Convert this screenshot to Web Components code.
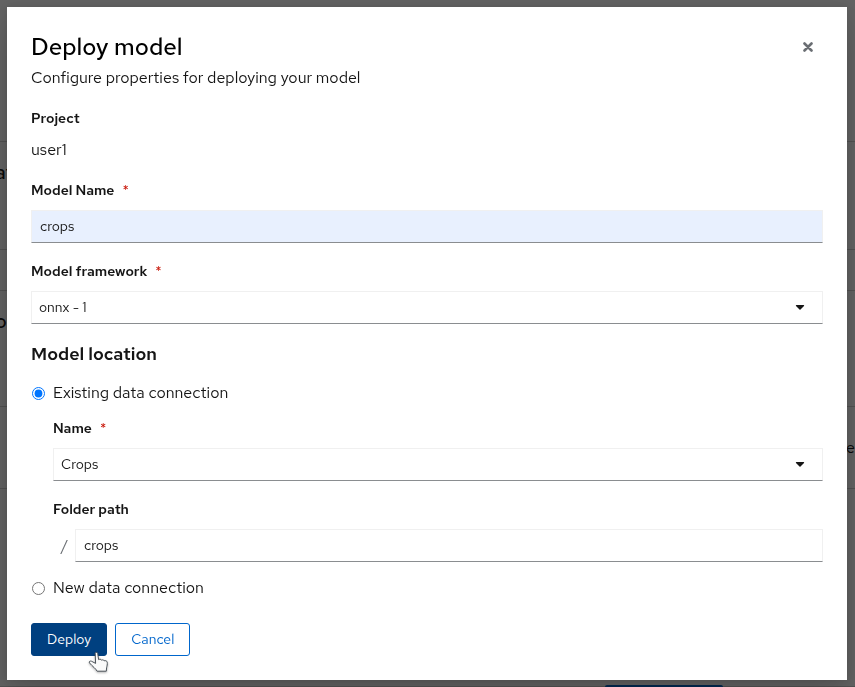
<!DOCTYPE html>
<html lang="en">
<head>
<meta charset="utf-8">
<title>Deploy model</title>
<style>
  html, body { margin: 0; height: 100%; overflow: hidden; }
  body { font-family: "Red Hat Text", Lato, "Open Sans", sans-serif; font-size: 16px; line-height: 24px; color: #151515; background: #fff; }
</style>
</head>
<body>
<project-page></project-page>
<modal-overlay>
  <deploy-dialog></deploy-dialog>
</modal-overlay>
<script>
const define = (name, html, setup) => {
  const template = document.createElement('template');
  template.innerHTML = html;
  customElements.define(name, class extends HTMLElement {
    constructor() {
      super();
      this.attachShadow({ mode: 'open' }).append(template.content.cloneNode(true));
    }
    connectedCallback() { if (setup) setup(this, this.shadowRoot); }
  });
};

define('project-page', `
  <style>
    :host { display: grid; height: 100vh; overflow: hidden; background: #fff; font-size: 20px; font-weight: 500;
      grid-template-rows: 142px 108px 41px 116px 82px 1fr; }
    section { display: flex; align-items: center; justify-content: space-between; border-bottom: 1px solid #d2d2d2; overflow: hidden; }
    .top { align-items: flex-start; padding-top: 18px; }
    .light { justify-content: flex-end; font-size: 16px; font-weight: 400; }
    .end { align-items: flex-end; justify-content: flex-end; border-bottom: 0; box-shadow: inset 0 -1px #d2d2d2; }
    .strip { width: 118px; height: 2px; margin-right: 132px; background: #06c; border-radius: 2px 2px 0 0; }
    .cut { margin-left: -5px; }
  </style>
  <section></section>
  <section class="top"><span class="cut">at</span></section>
  <section></section>
  <section class="top"><span class="cut">o</span></section>
  <section class="light"><span>e</span></section>
  <section class="end"><div class="strip"></div></section>
`);

define('modal-overlay', `
  <style>
    :host { position: fixed; inset: 0; box-sizing: border-box; padding: 7px 8px 7px 7px; background: rgba(3,3,3,.62); }
  </style>
  <slot></slot>
`);

define('form-field', `
  <style>
    :host { display: flex; flex-direction: column; gap: 10px; min-width: 0; }
    .label { display: flex; gap: 8px; font-size: 14px; line-height: 20px; font-weight: 600; }
    .star { color: #c9190b; font-weight: 400; }
    .row { display: flex; align-items: center; }
    .prefix { width: 22px; box-sizing: border-box; padding-left: 8px; color: #6a6e73; }
    .control { position: relative; flex: 1; display: flex; min-width: 0; }
    input, select { flex: 1; min-width: 0; width: 100%; height: 33px; box-sizing: border-box; margin: 0; border: 1px solid #f0f0f0;
      border-bottom-color: #8a8d90; border-radius: 0; background: #fff; font: inherit; font-size: 14px;
      line-height: 21px; color: #151515; padding: 0 8px 2px; outline: 0; appearance: none; }
    select { padding: 0 7px; }
    .filled { background: #e8f0fe; }
    svg { position: absolute; right: 18px; top: 14px; pointer-events: none; }
  </style>
  <label class="label" for="control"><span class="text"></span></label>
  <div class="row"></div>
`, (host, root) => {
  root.querySelector('.text').textContent = host.getAttribute('label');
  if (host.hasAttribute('required')) {
    const star = document.createElement('span');
    star.className = 'star';
    star.textContent = '*';
    root.querySelector('.label').append(star);
  }
  const row = root.querySelector('.row');
  const value = host.getAttribute('value');
  const prefix = host.getAttribute('prefix');
  row.innerHTML = (prefix ? `<span class="prefix">${prefix}</span>` : '') + '<div class="control">' +
    (host.getAttribute('type') === 'select'
      ? `<select id="control"><option>${value}</option></select><svg width="10" height="5" viewBox="0 0 10 5" aria-hidden="true"><path fill="#151515" d="M1.4 0h7.2c.5 0 .7.6.4 1L5.5 4.6a.7.7 0 0 1-1 0L1 1C.7.6.9 0 1.4 0z"/></svg>`
      : `<input id="control" type="text" value="${value}">`) + '</div>';
  if (host.hasAttribute('autofilled')) row.querySelector('input').className = 'filled';
});

define('radio-option', `
  <style>
    :host { display: block; }
    label { display: flex; align-items: center; gap: 8px; }
    input { width: 13px; height: 13px; margin: 1px 0 0 1px; accent-color: #0075ff; }
  </style>
  <label><input type="radio"><slot></slot></label>
`, (host, root) => {
  const input = root.querySelector('input');
  input.checked = host.hasAttribute('checked');
  input.addEventListener('change', () => {
    for (const other of host.parentNode.querySelectorAll('radio-option'))
      if (other !== host) other.shadowRoot.querySelector('input').checked = false;
  });
});

define('action-button', `
  <style>
    :host { display: inline-flex; }
    button { height: 33px; margin: 0; padding: 0 15px; border: 1px solid #06c; border-radius: 3px; background: #fff; color: #06c; font: inherit; font-size: 14px; line-height: 21px; cursor: pointer; }
    :host([primary]) button { border-color: #004080; background: #004080; color: #fff; }
  </style>
  <button type="button"><slot></slot></button>
`);

define('pointer-cursor', `
  <style>:host { display: block; } svg { display: block; filter: drop-shadow(0 1px 1px rgba(0,0,0,.3)); }</style>
  <svg width="22" height="23" viewBox="0 0 22 23" aria-hidden="true"><path d="M7.2 2.4c0-1.2 2.2-1.3 2.5 0l.9 6.2 1-.3c1-.2 1.7.2 2 .8 1.3-.5 2.1-.1 2.5.7 1.5-.4 2.9.1 3.1 1.4.4 2-.3 3.8-.6 5.6l-.3 3.4H9.1C8 17.6 4.5 15.5 1.6 12c-1.1-1.3.3-2.3 1.8-1.8l4.2 2.2z" fill="#fafafa" stroke="#4c5359" stroke-width="1" stroke-linejoin="round"/></svg>
`);

define('deploy-dialog', `
  <style>
    :host { display: block; box-sizing: border-box; padding: 24px; background: #fff; box-shadow: 0 16px 32px rgba(3,3,3,.16), 0 0 8px rgba(3,3,3,.1); }
    header { display: flex; justify-content: space-between; }
    h1 { margin: 0; font-size: 24px; line-height: 31px; font-weight: 500; color: #000; }
    p { margin: 0; padding-top: 4px; }
    .close { width: 30px; height: 32px; padding: 0; border: 0; background: none; display: grid; place-items: center; }
    .stack { display: flex; flex-direction: column; gap: 18px; padding-top: 18px; }
    dl { margin: 0; display: grid; gap: 10px; }
    dt { font-size: 14px; line-height: 20px; font-weight: 600; }
    dd { margin: 0; }
    h2 { margin: 0; font-size: 18px; line-height: 24px; font-weight: 600; }
    .location { display: flex; flex-direction: column; gap: 13px; padding-top: 15px; }
    .nested { display: flex; flex-direction: column; gap: 18px; padding: 0 0 1px 22px; }
    footer { display: flex; gap: 8px; padding-top: 23px; }
    .with-pointer { position: relative; display: flex; }
    pointer-cursor { position: absolute; left: 57px; top: 28px; pointer-events: none; }
  </style>
  <header>
    <div><h1>Deploy model</h1><p>Configure properties for deploying your model</p></div>
    <button class="close" type="button" aria-label="Close">
      <svg width="10" height="10" viewBox="0 0 10 10" aria-hidden="true"><path d="M1.5 1.5l7 7M8.5 1.5l-7 7" stroke="#6a6e73" stroke-width="2.6" stroke-linecap="round"/></svg>
    </button>
  </header>
  <div class="stack">
    <dl><dt>Project</dt><dd>user1</dd></dl>
    <form-field label="Model Name" required value="crops" autofilled></form-field>
    <form-field label="Model framework" required type="select" value="onnx - 1"></form-field>
    <h2>Model location</h2>
  </div>
  <div class="location">
    <radio-option checked>Existing data connection</radio-option>
    <div class="nested">
      <form-field label="Name" required type="select" value="Crops"></form-field>
      <form-field label="Folder path" prefix="/" value="crops"></form-field>
    </div>
    <radio-option>New data connection</radio-option>
  </div>
  <footer>
    <div class="with-pointer"><action-button primary>Deploy</action-button><pointer-cursor></pointer-cursor></div>
    <action-button>Cancel</action-button>
  </footer>
`);
</script>
</body>
</html>
